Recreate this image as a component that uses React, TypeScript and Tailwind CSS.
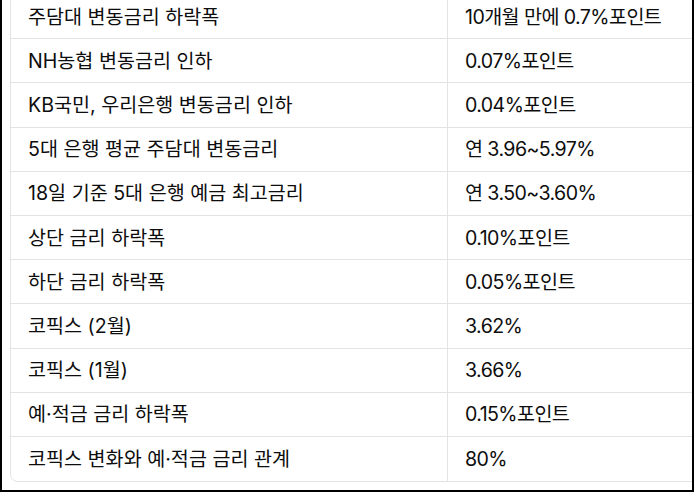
const rows: [string, string][] = [
  ["주담대 변동금리 하락폭", "10개월 만에 0.7%포인트"],
  ["NH농협 변동금리 인하", "0.07%포인트"],
  ["KB국민, 우리은행 변동금리 인하", "0.04%포인트"],
  ["5대 은행 평균 주담대 변동금리", "연 3.96~5.97%"],
  ["18일 기준 5대 은행 예금 최고금리", "연 3.50~3.60%"],
  ["상단 금리 하락폭", "0.10%포인트"],
  ["하단 금리 하락폭", "0.05%포인트"],
  ["코픽스 (2월)", "3.62%"],
  ["코픽스 (1월)", "3.66%"],
  ["예·적금 금리 하락폭", "0.15%포인트"],
  ["코픽스 변화와 예·적금 금리 관계", "80%"],
];

export default function App() {
  return (
    <div className="w-[694px] h-[492px] overflow-hidden bg-white border-x-2 border-b-2 border-black">
      <div
        className="ml-2 -mt-[6px] w-[720px] border border-[#e3e3e3] rounded-lg overflow-hidden text-[19.6px] leading-7 text-[#0d0d0d]"
        style={{ fontFamily: 'Inter, "Noto Sans CJK KR", sans-serif' }}
      >
        {rows.map(([label, value], i) => (
          <div
            key={label}
            className={`flex h-[44.2px] items-center ${i < rows.length - 1 ? "border-b border-[#e3e3e3]" : ""}`}
          >
            <div className="w-[437px] h-full flex items-center pl-[17px] pr-4 border-r border-[#e3e3e3]">
              {label}
            </div>
            <div className="flex-1 pl-[17px] pr-4 tracking-[-0.03em]">{value}</div>
          </div>
        ))}
      </div>
    </div>
  );
}
